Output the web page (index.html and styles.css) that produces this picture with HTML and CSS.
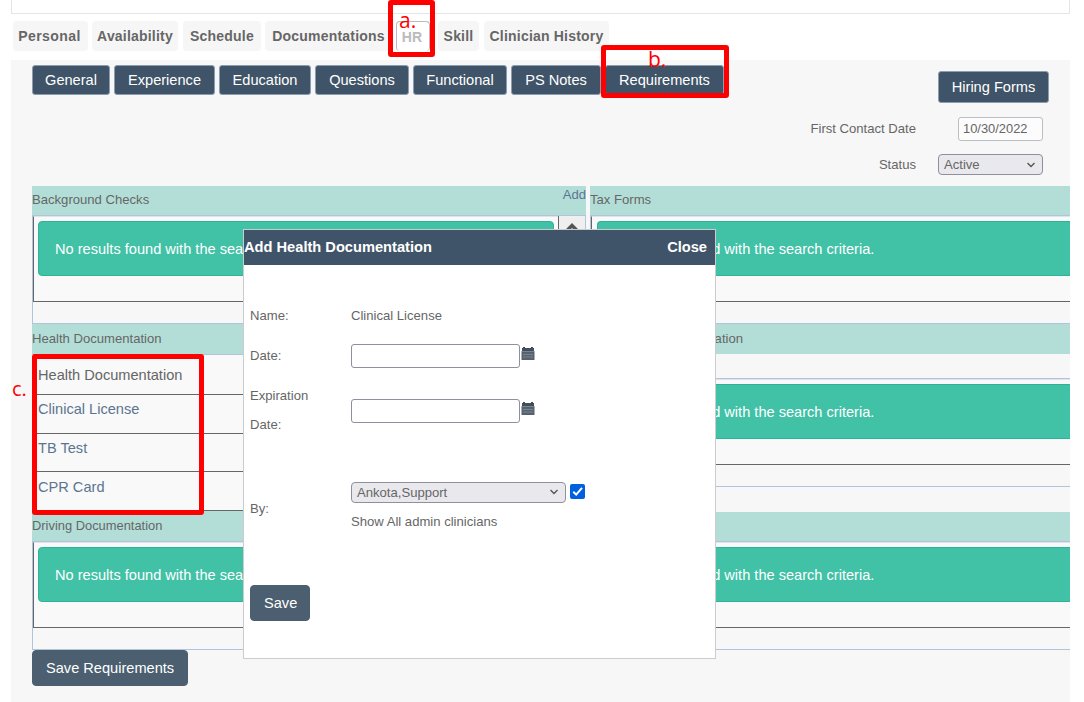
FILE: index.html
```html
<!DOCTYPE html>
<html lang="en">
<head>
  <meta charset="UTF-8">
  <title>Clinician - HR Requirements</title>
  <link rel="stylesheet" href="styles.css">
</head>
<body>

<div class="top-box"></div>

<div class="tabs">
  <a class="tab personal">Personal</a>
  <a class="tab availability">Availability</a>
  <a class="tab schedule">Schedule</a>
  <a class="tab documentations">Documentations</a>
  <a class="tab hr active">HR</a>
  <a class="tab skill">Skill</a>
  <a class="tab history">Clinician History</a>
</div>

<div class="panel">
  <div class="toolbar">
    <div class="subtabs">
      <button class="general">General</button>
      <button class="experience">Experience</button>
      <button class="education">Education</button>
      <button class="questions">Questions</button>
      <button class="functional">Functional</button>
      <button class="notes">PS Notes</button>
      <button class="requirements">Requirements</button>
    </div>
    <button class="hiring">Hiring Forms</button>
  </div>

  <div class="field contact">
    <label>First Contact Date</label>
    <input type="text" value="10/30/2022">
  </div>
  <div class="field status">
    <label>Status</label>
    <div class="select">Active
      <svg width="10" height="6" viewBox="0 0 10 6"><path d="M1.5 1 5 4.5 8.5 1" fill="none" stroke="#555" stroke-width="1.4"/></svg>
    </div>
  </div>

  <div class="columns">
    <div class="column left">
      <div class="heading">Background Checks <a class="add">Add</a></div>
      <div class="box scroll">
        <div class="inner">
          <div class="alert">No results found with the search criteria.</div>
        </div>
        <div class="scrollbar">
          <svg width="12" height="8" viewBox="0 0 12 8"><path d="M0 6 6 0 12 6V8H9L6 5 3 8H0z" fill="#555"/></svg>
        </div>
      </div>
      <div class="heading">Health Documentation</div>
      <div class="list">
        <div class="row title">Health Documentation</div>
        <div class="row">Clinical License</div>
        <div class="row short">TB Test</div>
        <div class="row">CPR Card</div>
      </div>
      <div class="heading driving">Driving Documentation</div>
      <div class="box">
        <div class="inner">
          <div class="alert">No results found with the search criteria.</div>
        </div>
      </div>
    </div>

    <div class="column right">
      <div class="heading">Tax Forms</div>
      <div class="box">
        <div class="inner">
          <div class="alert">No results found with the search criteria.</div>
        </div>
      </div>
      <div class="heading plain"><span class="wide">Education Documentation</span></div>
      <div class="box spaced">
        <div class="inner">
          <div class="alert">No results found with the search criteria.</div>
        </div>
      </div>
      <div class="heading"></div>
      <div class="box">
        <div class="inner">
          <div class="alert">No results found with the search criteria.</div>
        </div>
      </div>
    </div>
  </div>

  <button class="save">Save Requirements</button>
</div>

<div class="modal">
  <div class="modal-header">
    <span>Add Health Documentation</span>
    <a>Close</a>
  </div>
  <div class="modal-body">
    <div class="form-row">
      <label>Name:</label>
      <div>Clinical License</div>
    </div>
    <div class="form-row">
      <label>Date:</label>
      <div class="date">
        <input type="text">
        <svg width="14" height="13" viewBox="0 0 14 13"><path fill="#414e5b" d="M1 1h1V0h2v1h6V0h2v1h1v3H1z"/><path fill="#56636f" d="M.5 4h13v9H.5z"/><path stroke="#8993a0" d="M1 4.5h12M2 7.5h10M2 10h10" fill="none" stroke-width=".7"/></svg>
      </div>
    </div>
    <div class="form-row expiration">
      <label>Expiration Date:</label>
      <div class="date">
        <input type="text">
        <svg width="14" height="13" viewBox="0 0 14 13"><path fill="#414e5b" d="M1 1h1V0h2v1h6V0h2v1h1v3H1z"/><path fill="#56636f" d="M.5 4h13v9H.5z"/><path stroke="#8993a0" d="M1 4.5h12M2 7.5h10M2 10h10" fill="none" stroke-width=".7"/></svg>
      </div>
    </div>
    <div class="form-row by">
      <label>By:</label>
      <div>
        <div class="pick">
          <div class="select">Ankota,Support
            <svg width="10" height="6" viewBox="0 0 10 6"><path d="M1.5 1 5 4.5 8.5 1" fill="none" stroke="#555" stroke-width="1.4"/></svg>
          </div>
          <span class="check"><svg width="15" height="15" viewBox="0 0 15 15"><path d="M3.3 7.8 6.2 10.6 12 3.8" fill="none" stroke="#fff" stroke-width="2"/></svg></span>
        </div>
        <div class="show-all">Show All admin clinicians</div>
      </div>
    </div>
    <button class="save">Save</button>
  </div>
</div>

<!-- step markers -->
<div class="mark mark-a"><span>a.</span></div>
<div class="mark mark-b"><span>b.</span></div>
<div class="mark mark-c"><span>c.</span></div>

</body>
</html>
```

FILE: styles.css
```css
* {
  box-sizing: border-box;
}
body {
  margin: 0;
  width: 1084px;
  height: 702px;
  overflow: hidden;
  position: relative;
  background: #fff;
  font-family: "Liberation Sans", Arial, sans-serif;
  font-size: 13.1px;
  color: #666;
}
button {
  font-family: inherit;
  font-size: 14.6px;
  padding: 0;
  color: #fff;
  background: #3f5468;
  border: 1px solid #8d9db1;
  border-radius: 3px;
}
input {
  font-family: inherit;
  font-size: 13.1px;
  color: #666;
  border: 1px solid #8f8f9d;
  border-radius: 3px;
}
.top-box {
  height: 14px;
  margin: 0 14px 0 11px;
  border: 1px solid #e5e5e5;
  border-top: none;
}

/* main tabs */
.tabs {
  display: flex;
  padding: 7px 0 0 13px;
  height: 46px;
}
.tab {
  height: 30px;
  line-height: 30px;
  margin-right: 4px;
  text-align: center;
  font-size: 14px;
  font-weight: bold;
  letter-spacing: 0.2px;
  background: #f6f6f6;
  border-radius: 4px;
}
.personal { width: 75px; letter-spacing: 0.4px; }
.availability { width: 86px; }
.schedule { width: 78px; }
.documentations { width: 127px; }
.hr { width: 34px; }
.skill { width: 41px; }
.history { width: 125px; }
.tab.availability, .tab.skill { margin-right: 5px; }
.tab.personal { padding-right: 2px; }
.tab.hr {
  margin-right: 8px;
  padding-right: 2px;
  color: #bbb;
  background: #fff;
  border: 1px solid #bbb;
  border-bottom: none;
}

.panel {
  margin: 0 14px 0 11px;
  height: 642px;
  padding: 5px 0 0 21px;
  background: #f7f7f7;
  overflow: hidden;
}
.toolbar {
  display: flex;
  justify-content: space-between;
  padding-right: 21px;
  height: 51px;
}
.subtabs {
  display: flex;
  gap: 4px;
}
.subtabs button {
  height: 30px;
}
.subtabs .general { width: 78px; }
.subtabs .experience { width: 101px; }
.subtabs .education { width: 92px; }
.subtabs .questions { width: 94px; }
.subtabs .functional { width: 94px; }
.subtabs .notes { width: 90px; }
.subtabs .requirements { width: 119px; }
.hiring {
  width: 111px;
  height: 32px;
  margin-top: 6px;
}
.field {
  display: flex;
  justify-content: flex-end;
  align-items: center;
  height: 25px;
  padding-right: 27px;
}
.contact input {
  width: 85px;
  height: 24px;
  margin-left: 42px;
  padding: 0 4px;
  font-size: 12.9px;
  border-color: #bdbdc4;
  background: #fcfcfc;
}
.status {
  margin-top: 11px;
}
.select {
  display: flex;
  align-items: center;
  justify-content: space-between;
  height: 21px;
  padding: 0 6px 0 5px;
  border: 1px solid #8f8f9d;
  border-radius: 4px;
  background: #e9e9ed;
}
.status .select {
  width: 105px;
  margin-left: 22px;
}

/* requirement sections */
.columns {
  display: flex;
  gap: 4px;
  margin-top: 9px;
}
.left {
  width: 554px;
}
.right {
  width: 480px;
}
.heading {
  height: 29px;
  line-height: 27px;
  background: #b3ded8;
  display: flex;
  justify-content: space-between;
}
.heading .add {
  line-height: 18px;
  color: #5b7590;
}
.wide {
  width: 153px;
  text-align: right;
  white-space: nowrap;
}
.heading.plain {
  height: 30px;
  line-height: 29px;
}
.box {
  height: 109px;
  border: 1px solid #b0c4de;
  border-right: none;
  display: flex;
  align-items: flex-start;
}
.inner {
  flex: 1;
  height: 86px;
  padding: 4px 0 0 4px;
  border-left: 1px solid #666;
  border-bottom: 1px solid #666;
  border-top: 1px solid #e2e2ea;
  background: #f9f9f9;
}
.right .inner {
  padding-left: 5px;
}
.right .alert {
  border-right: none;
  border-radius: 4px 0 0 4px;
}
.alert {
  height: 55px;
  line-height: 54px;
  padding-left: 16px;
  font-size: 14.6px;
  color: #fff;
  background: #41c1a6;
  border: 1px solid #2bb596;
  border-radius: 4px;
}
.scroll .inner {
  padding-right: 4px;
}
.scrollbar {
  width: 28px;
  height: 86px;
  padding: 7px 0 0 7px;
  border-left: 1px solid #666;
  border-right: 1px solid #b0c4de;
  background: #efefef;
}
.scrollbar svg {
  display: block;
}
.left .box + .heading {
  height: 30px;
  line-height: 29px;
}
.list {
  border-top: 1px solid #b0c4de;
  font-size: 14.6px;
  color: #5b7590;
  background: #f9f9f9;
}
.row {
  height: 39px;
  padding: 6px 0 0 6px;
  border-bottom: 1px solid #666;
}
.row.title {
  height: 40px;
  padding-top: 12px;
  color: #666;
}
.row.short {
  height: 38px;
}
.row:last-child {
  padding-top: 7px;
}
.left .heading.driving {
  height: 30px;
  line-height: 29px;
  font-size: 12.9px;
}
.box.spaced {
  margin: 24px 0 25px;
}
.save {
  height: 36px;
  padding: 0 13px;
  white-space: nowrap;
  background: #4c5f70;
  border: 1px solid #4c5f70;
  border-radius: 4px;
}
.panel .save {
  display: block;
  width: 156px;
}

/* popup */
.modal {
  position: absolute;
  left: 243px;
  top: 229px;
  width: 473px;
  height: 430px;
  background: #fff;
  border: 1px solid #ccc;
}
.modal-header {
  display: flex;
  justify-content: space-between;
  height: 35px;
  line-height: 34px;
  padding-right: 8px;
  font-size: 14.65px;
  font-weight: bold;
  color: #fff;
  background: #3f5468;
}
.modal-body {
  padding: 30px 0 0 6px;
}
.form-row {
  display: grid;
  grid-template-columns: 101px 1fr;
  align-items: center;
  height: 40px;
}
.form-row label {
  width: 70px;
  line-height: 29px;
}
.date {
  display: flex;
  padding-top: 2px;
}
.date input {
  width: 169px;
  height: 24px;
  margin-right: 1px;
}
.date svg {
  margin-top: 3px;
}
.expiration {
  height: 69px;
}
.by {
  height: 80px;
  margin-top: 19px;
}
.by label {
  padding-top: 10px;
}
.pick {
  display: flex;
  align-items: center;
  margin-top: 4px;
}
.pick .select {
  width: 215px;
}
.check {
  width: 15px;
  height: 15px;
  margin: -2px 0 0 4px;
  border-radius: 2px;
  background: #0060df;
}
.check svg {
  display: block;
}
.show-all {
  margin-top: 11px;
}
.modal .save {
  width: 60px;
  margin-top: 42px;
}

/* red step markers */
.mark {
  position: absolute;
  border: 5px solid #f00;
  border-radius: 3px;
  font-family: "Open Sans", sans-serif;
  font-size: 20px;
  line-height: 20px;
  color: #f00;
}
.mark span {
  position: absolute;
}
.mark-a {
  left: 388px;
  top: 0;
  width: 47px;
  height: 57px;
}
.mark-a span {
  left: 6px;
  top: 5px;
  font-size: 21px;
}
.mark-b {
  left: 601px;
  top: 45px;
  width: 128px;
  height: 53px;
}
.mark-b span {
  left: 42px;
  top: -1px;
  font-size: 21px;
}
.mark-c {
  left: 32px;
  top: 354px;
  width: 172px;
  height: 161px;
}
.mark-c span {
  left: -25px;
  top: 20px;
}
```
